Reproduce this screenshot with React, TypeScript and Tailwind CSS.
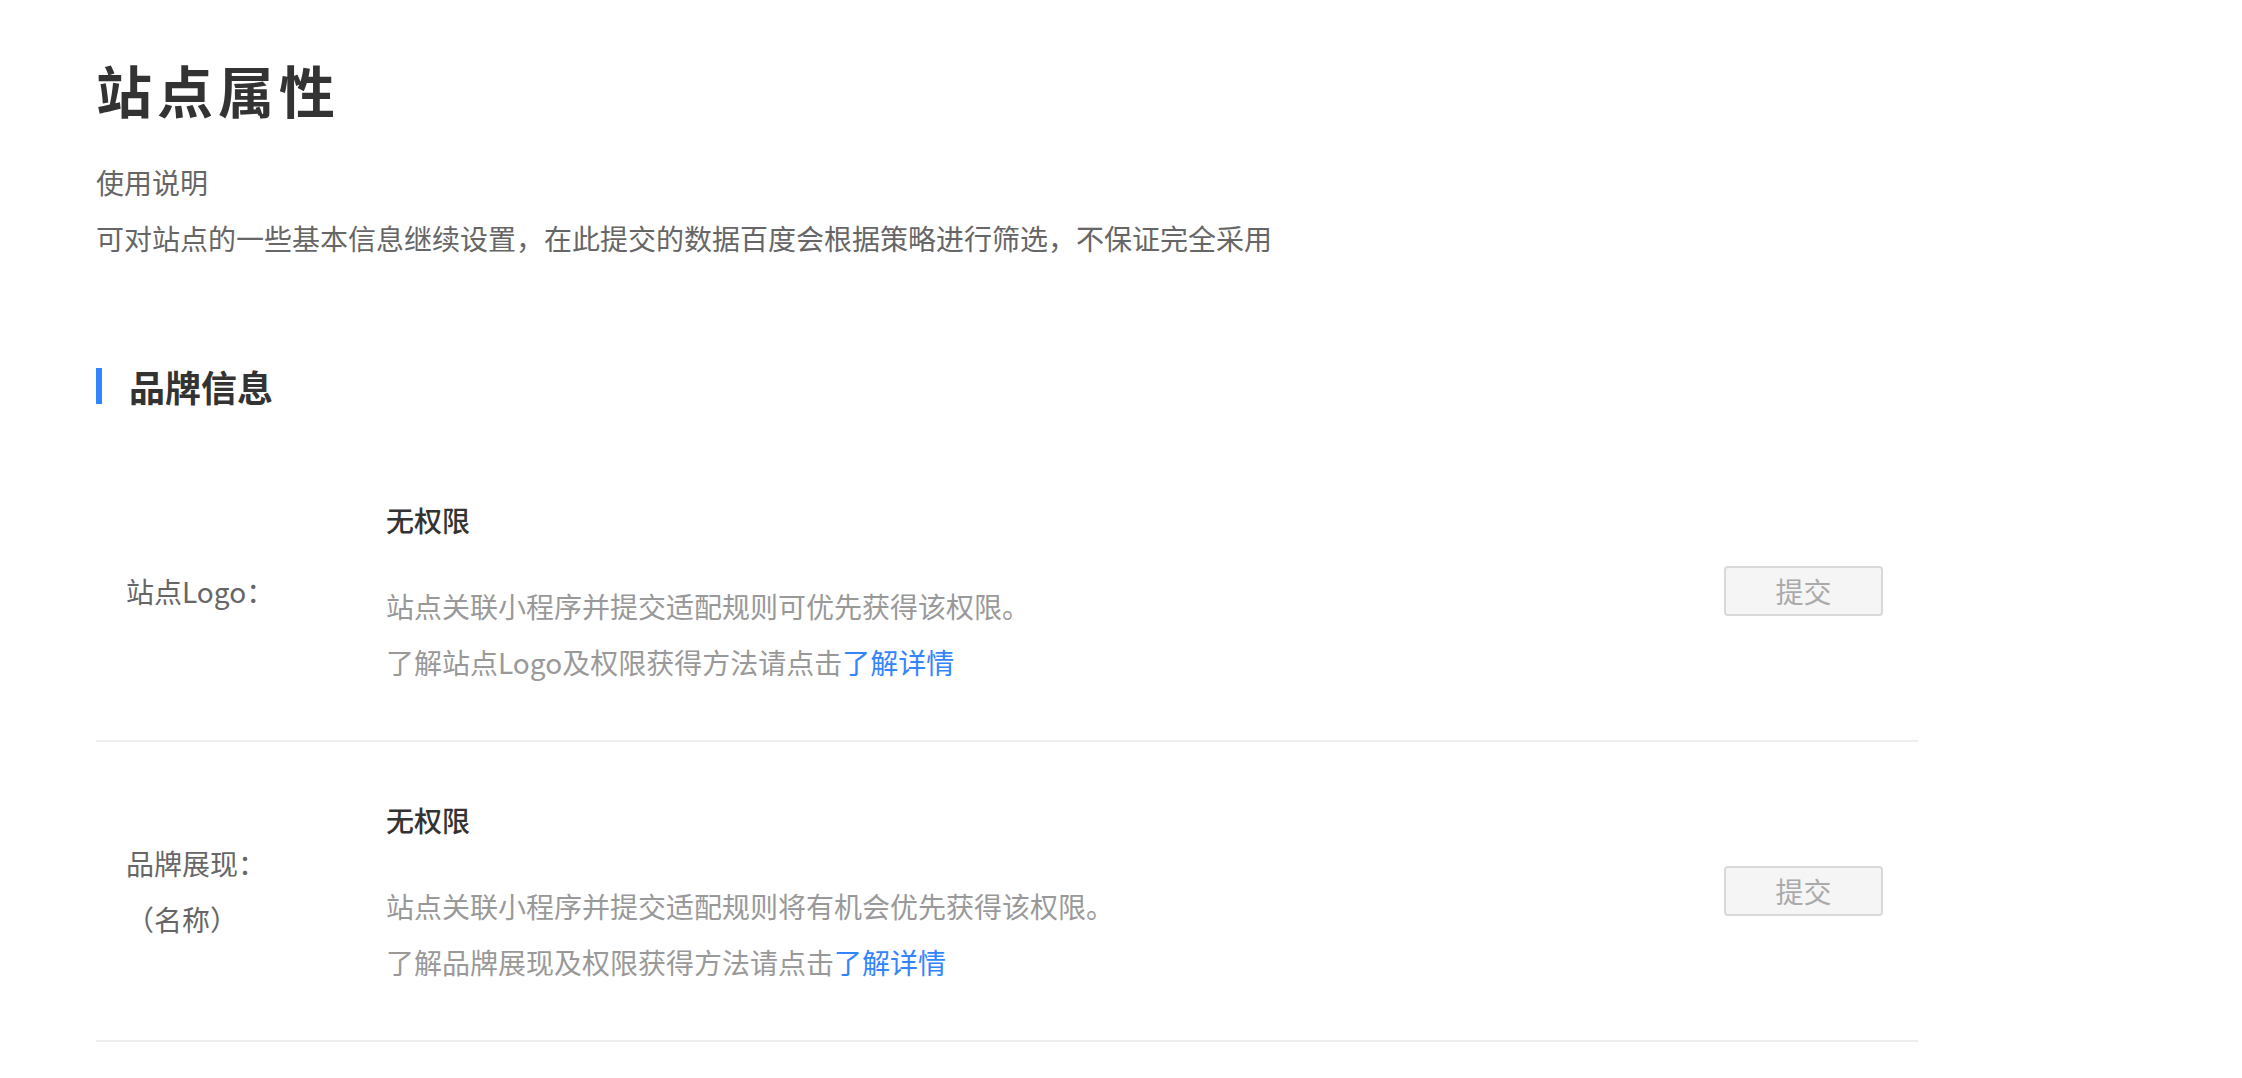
const font = { fontFamily: '"Noto Sans CJK SC", "Noto Sans", sans-serif' }

type Item = {
  label: string[]
  tip: string
  name: string
}

const items: Item[] = [
  {
    label: ['站点Logo：'],
    tip: '站点关联小程序并提交适配规则可优先获得该权限。',
    name: '站点Logo',
  },
  {
    label: ['品牌展现：', '（名称）'],
    tip: '站点关联小程序并提交适配规则将有机会优先获得该权限。',
    name: '品牌展现',
  },
]

export default function App() {
  return (
    <div style={font} className="min-h-screen w-full bg-white pl-[96px] pr-[324px] pt-[49px]">
      {/* Header */}
      <h1 className="text-[56px] leading-[80px] font-bold tracking-[5px] text-[#333]">站点属性</h1>
      <div className="mt-[25px] text-[28px] leading-[56px] text-[#666]">
        <p>使用说明</p>
        <p>可对站点的一些基本信息继续设置，在此提交的数据百度会根据策略进行筛选，不保证完全采用</p>
      </div>

      {/* Section */}
      <div className="mt-[102px] flex h-[36px] items-center">
        <span className="h-[36px] w-[6px] bg-[#3385ff]"></span>
        <h2 className="ml-[27px] text-[36px] leading-[36px] font-bold text-[#333]">品牌信息</h2>
      </div>

      <div className="mt-[38px]">
        {items.map((item, index) => (
          <div key={index} className="flex h-[300px] items-center border-b-2 border-[#eeeeee] pl-[30px] pr-[35px]">
            <div className="w-[260px] shrink-0 text-[28px] leading-[56px] text-[#666]">
              {item.label.map((l) => (
                <p key={l}>{l}</p>
              ))}
            </div>
            <div className="flex-1">
              <p className="text-[28px] leading-[56px] font-medium text-[#333]">无权限</p>
              <div className="mt-[30px] text-[28px] leading-[56px] text-[#999]">
                <p>{item.tip}</p>
                <p>
                  了解{item.name}及权限获得方法请点击<a className="cursor-pointer text-[#3385ff]">了解详情</a>
                </p>
              </div>
            </div>
            <button className="h-[50px] w-[159px] rounded-[4px] border-2 border-[#d9d9d9] bg-[#f5f5f5] text-[28px] text-[#aaa]">
              提交
            </button>
          </div>
        ))}
      </div>
    </div>
  )
}
